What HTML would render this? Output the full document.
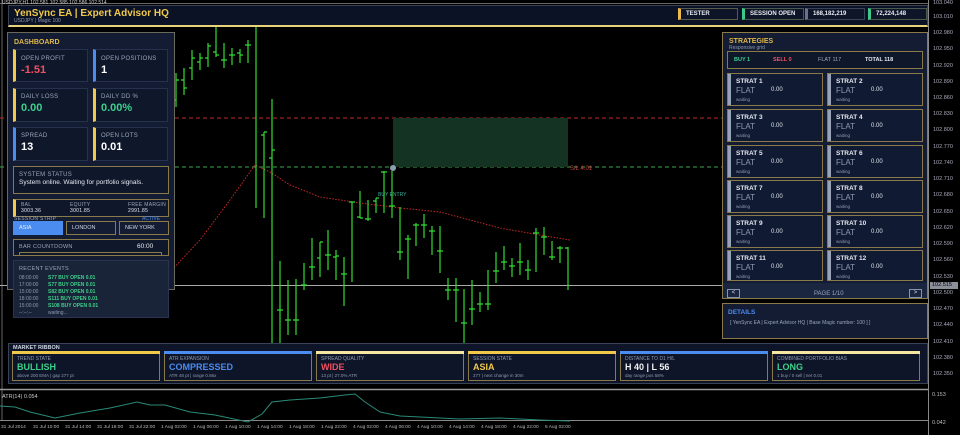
<!DOCTYPE html>
<html><head><meta charset="utf-8"><style>
*{margin:0;padding:0;box-sizing:border-box}
body{width:960px;height:435px;background:#000;font-family:"Liberation Sans",sans-serif;color:#cfd6e2;position:relative;overflow:hidden}
.a{position:absolute}
.p{position:absolute;background:#131c33;border:1px solid #8a7a4a}
.c{position:absolute;background:#0f172b;border:1px solid #26314d}
.lb{font-size:6px;color:#9aa6bc;letter-spacing:.3px;white-space:nowrap}
.ax{position:absolute;left:933px;font-size:5.5px;color:#aab;}
.tk{position:absolute;top:425px;font-size:4.8px;color:#bbb;white-space:nowrap}
.sc{position:absolute;width:96px;height:33px;background:#101a33;border:1px solid #8a7a4a}
.sc i{position:absolute;left:0;top:0;bottom:0;width:3px;background:#98a2b8}
.sc b{position:absolute;left:8px;top:4px;font-size:6.5px;color:#e6e9f0}
.sc s{position:absolute;left:8px;top:12px;font-size:8px;color:#8f9ab0;text-decoration:none}
.sc u{position:absolute;left:43px;top:13px;font-size:6px;color:#dfe3ea;text-decoration:none}
.sc em{position:absolute;left:8px;top:23px;font-size:4.5px;color:#8f9ab0;font-style:normal}
.rc{position:absolute;top:351px;width:148px;height:30px;background:#0e1529;border:1px solid #8a7a4a;border-top-width:0}
.rc i{position:absolute;left:-1px;right:-1px;top:0;height:3px}
.rc .t{position:absolute;left:4px;top:5px;font-size:5px;color:#8f9ab0}
.rc .v{position:absolute;left:4px;top:11px;font-size:9px;font-weight:bold}
.rc .s{position:absolute;left:4px;top:22px;font-size:4.5px;color:#8f9ab0}
</style></head><body>
<svg class="a" style="left:0;top:0" width="960" height="435">
<line x1="2" y1="0" x2="2" y2="420" stroke="#666" stroke-width="1"/>
<line x1="928.5" y1="0" x2="928.5" y2="435" stroke="#888"/>
<line x1="0" y1="3.5" x2="928" y2="3.5" stroke="#666"/>
<line x1="0" y1="118" x2="928" y2="118" stroke="#c62828" stroke-dasharray="4,3"/>
<line x1="0" y1="167" x2="928" y2="167" stroke="#3aa64a" stroke-dasharray="4,3"/>
<rect x="393" y="118" width="175" height="49" fill="#143322"/>
<line x1="0" y1="285.5" x2="928" y2="285.5" stroke="#aaa"/>
<text x="570" y="170" font-size="6" fill="#c04040" font-family="Liberation Sans">S/L 4.01</text>
<text x="378" y="196" font-size="5" fill="#3ab0a0" font-family="Liberation Sans">BUY ENTRY</text>
<circle cx="393" cy="168" r="3" fill="#8aa0b0"/>
<path d="M170 272 L200 240 L230 200 L255 165 L270 172 L290 185 L320 197 L360 203 L400 208 L440 212 L470 220 L500 228 L540 235 L570 240" fill="none" stroke="#c62828" stroke-dasharray="1.5,1.5"/>
<g stroke="#33dd33" stroke-width="1.2" fill="none">
<path d="M176 73V107M173 100h3M176 80h3"/>
<path d="M184 68V95M181 80h3M184 88h3"/>
<path d="M192 50V80M189 68h3M192 58h3"/>
<path d="M200 53V70M197 62h3M200 58h3"/>
<path d="M208 43V67M205 58h3M208 46h3"/>
<path d="M216 27V57M213 52h3M216 55h3"/>
<path d="M224 43V68M221 60h3M224 60h3"/>
<path d="M232 48V65M229 55h3M232 55h3"/>
<path d="M240 49V63M237 53h3M240 55h3"/>
<path d="M248 40V63M245 45h3M248 45h3"/>
<path d="M256 27V208"/>
<path d="M264 132V218M261 135h3M264 132h3"/>
<path d="M272 99V343M269 158h3M272 150h3"/>
<path d="M280 261V343M277 310h3M280 310h3"/>
<path d="M288 280V335M285 320h3M288 320h3"/>
<path d="M296 279V335M293 320h3M296 320h3"/>
<path d="M304 263V290M301 285h3M304 285h3"/>
<path d="M312 238V280M309 267h3M312 267h3"/>
<path d="M320 242V277M317 258h3M320 242h3"/>
<path d="M328 230V270M325 255h3M328 255h3"/>
<path d="M336 250V280M333 257h3M336 256h3"/>
<path d="M344 257V306M341 274h3M344 274h3"/>
<path d="M352 202V282M349 202h3M352 202h3"/>
<path d="M360 191V218M357 217h3M360 218h3"/>
<path d="M368 200V221M365 219h3M368 219h3"/>
<path d="M376 198V213M373 201h3M376 198h3"/>
<path d="M384 171V213M381 172h3M384 172h3"/>
<path d="M392 171V218M389 206h3M392 206h3"/>
<path d="M400 207V260M397 252h3M400 252h3"/>
<path d="M408 235V279M405 239h3M408 239h3"/>
<path d="M416 223V246M413 225h3M416 225h3"/>
<path d="M424 214V238M421 225h3M424 225h3"/>
<path d="M432 226V255M429 231h3M432 231h3"/>
<path d="M440 226V273M437 251h3M440 251h3"/>
<path d="M448 278V300M445 290h3M448 290h3"/>
<path d="M456 278V322M453 290h3M456 290h3"/>
<path d="M464 289V343M461 323h3M464 323h3"/>
<path d="M472 280V325M469 309h3M472 309h3"/>
<path d="M480 292V312M477 304h3M480 304h3"/>
<path d="M488 270V310M485 304h3M488 304h3"/>
<path d="M496 252V283M493 271h3M496 271h3"/>
<path d="M504 246V270M501 262h3M504 262h3"/>
<path d="M512 258V277M509 266h3M512 266h3"/>
<path d="M520 243V275M517 262h3M520 262h3"/>
<path d="M528 260V280M525 270h3M528 270h3"/>
<path d="M536 228V272M533 233h3M536 233h3"/>
<path d="M544 227V255M541 237h3M544 237h3"/>
<path d="M552 241V260M549 257h3M552 257h3"/>
<path d="M560 246V263M557 248h3M560 248h3"/>
<path d="M568 247V290M565 248h3"/>
</g>
<line x1="0" y1="389.5" x2="928" y2="389.5" stroke="#999" stroke-width="1.5"/>
<line x1="0" y1="420.5" x2="928" y2="420.5" stroke="#888"/>
<path d="M0 406L15 407L30 412L55 418L80 413L110 408L137 402L150 405L165 405L190 412L215 415L248 422L262 414L272 402L290 400L320 398L345 395L355 394L365 402L380 412L400 416L420 417L440 418L460 419L500 418L540 420L570 421" fill="none" stroke="#2a8a7a"/>
<text x="2" y="398" font-size="5.5" fill="#ccc" font-family="Liberation Sans">ATR(14) 0.054</text>
<text x="932" y="396" font-size="5.5" fill="#bbb" font-family="Liberation Sans">0.153</text>
<text x="932" y="424" font-size="5.5" fill="#bbb" font-family="Liberation Sans">0.042</text>
</svg>
<div class="a" style="left:2px;top:0;font-size:5px;color:#ccc">USDJPY,H1 102.581 102.585 102.586 102.514</div>
<div class="ax" style="top:0">103.040</div><div class="ax" style="top:14px">103.010</div><div class="ax" style="top:30px">102.980</div><div class="ax" style="top:46px">102.950</div><div class="ax" style="top:63px">102.920</div><div class="ax" style="top:79px">102.890</div><div class="ax" style="top:95px">102.860</div><div class="ax" style="top:111px">102.830</div><div class="ax" style="top:127px">102.800</div><div class="ax" style="top:144px">102.770</div><div class="ax" style="top:160px">102.740</div><div class="ax" style="top:176px">102.710</div><div class="ax" style="top:192px">102.680</div><div class="ax" style="top:209px">102.650</div><div class="ax" style="top:225px">102.620</div><div class="ax" style="top:241px">102.590</div><div class="ax" style="top:257px">102.560</div><div class="ax" style="top:274px">102.530</div><div class="ax" style="top:290px">102.500</div><div class="ax" style="top:306px">102.470</div><div class="ax" style="top:322px">102.440</div><div class="ax" style="top:339px">102.410</div><div class="ax" style="top:355px">102.380</div><div class="ax" style="top:371px">102.350</div>
<div class="a" style="left:930px;top:282px;width:28px;height:7px;background:#8a8f9a;color:#000;font-size:5.5px;padding-left:2px">102.515</div>
<div class="tk" style="left:1px">31 Jul 2014</div><div class="tk" style="left:33px">31 Jul 10:00</div><div class="tk" style="left:65px">31 Jul 14:00</div><div class="tk" style="left:97px">31 Jul 18:00</div><div class="tk" style="left:129px">31 Jul 22:00</div><div class="tk" style="left:161px">1 Aug 02:00</div><div class="tk" style="left:193px">1 Aug 06:00</div><div class="tk" style="left:225px">1 Aug 10:00</div><div class="tk" style="left:257px">1 Aug 14:00</div><div class="tk" style="left:289px">1 Aug 18:00</div><div class="tk" style="left:321px">1 Aug 22:00</div><div class="tk" style="left:353px">4 Aug 02:00</div><div class="tk" style="left:385px">4 Aug 06:00</div><div class="tk" style="left:417px">4 Aug 10:00</div><div class="tk" style="left:449px">4 Aug 14:00</div><div class="tk" style="left:481px">4 Aug 18:00</div><div class="tk" style="left:513px">4 Aug 22:00</div><div class="tk" style="left:545px">5 Aug 02:00</div>
<div class="a" style="left:8px;top:5px;width:920px;height:22px;background:#0b1226;border:1px solid #3a4256;border-bottom:2px solid #e8d27a"></div>
<div class="a" style="left:14px;top:8px;font-size:10px;font-weight:bold;color:#f0c94a">YenSync EA | Expert Advisor HQ</div>
<div class="a" style="left:14px;top:18px;font-size:5px;color:#8f9ab0">USDJPY | Magic 100</div>
<div class="a" style="left:678px;top:8px;width:60px;height:12px;border:1px solid #5a5a48;border-left:3px solid #f0b84a;background:#0e1529;font-size:6px;color:#e6e9f0;padding:2px 0 0 5px;font-weight:bold">TESTER</div>
<div class="a" style="left:742px;top:8px;width:62px;height:12px;border:1px solid #4a5a4a;border-left:3px solid #3cc98a;background:#0e1529;font-size:6px;color:#e6e9f0;padding:2px 0 0 5px;font-weight:bold">SESSION OPEN</div>
<div class="a" style="left:805px;top:8px;width:60px;height:12px;border:1px solid #3a4256;border-left:3px solid #6a7488;background:#0e1529;font-size:6px;color:#e6e9f0;padding:2px 0 0 5px;font-weight:bold">168,182,219</div>
<div class="a" style="left:868px;top:8px;width:59px;height:12px;border:1px solid #4a5a4a;border-left:3px solid #3cc98a;background:#0e1529;font-size:6px;color:#e6e9f0;padding:2px 0 0 5px;font-weight:bold">72,224,148</div>
<div class="p" style="left:7px;top:32px;width:168px;height:258px;border-color:#6a6a5a"></div>
<div class="a" style="left:14px;top:39px;font-size:7px;font-weight:bold;color:#e0b84a">DASHBOARD</div>
<div class="c" style="left:13px;top:49px;width:75px;height:33px;border-left:3px solid #f0c94a"><div class="lb" style="position:absolute;left:5px;top:6px">OPEN PROFIT</div><div style="position:absolute;left:5px;top:14px;font-size:11px;font-weight:bold;color:#f05060">-1.51</div></div>
<div class="c" style="left:93px;top:49px;width:75px;height:33px;border-left:3px solid #4a8cf0"><div class="lb" style="position:absolute;left:5px;top:6px">OPEN POSITIONS</div><div style="position:absolute;left:5px;top:14px;font-size:11px;font-weight:bold;color:#fff">1</div></div>
<div class="c" style="left:13px;top:88px;width:75px;height:34px;border-left:3px solid #f0c94a"><div class="lb" style="position:absolute;left:5px;top:5px">DAILY LOSS</div><div style="position:absolute;left:5px;top:13px;font-size:11px;font-weight:bold;color:#3cd08a">0.00</div></div>
<div class="c" style="left:93px;top:88px;width:75px;height:34px;border-left:3px solid #f0c94a"><div class="lb" style="position:absolute;left:5px;top:5px">DAILY DD %</div><div style="position:absolute;left:5px;top:13px;font-size:11px;font-weight:bold;color:#3cd08a">0.00%</div></div>
<div class="c" style="left:13px;top:127px;width:75px;height:34px;border-left:3px solid #4a8cf0"><div class="lb" style="position:absolute;left:5px;top:5px">SPREAD</div><div style="position:absolute;left:5px;top:13px;font-size:11px;font-weight:bold;color:#fff">13</div></div>
<div class="c" style="left:93px;top:127px;width:75px;height:34px;border-left:3px solid #f0c94a"><div class="lb" style="position:absolute;left:5px;top:5px">OPEN LOTS</div><div style="position:absolute;left:5px;top:13px;font-size:11px;font-weight:bold;color:#fff">0.01</div></div>
<div class="c" style="left:13px;top:166px;width:156px;height:28px;border-color:#8a7a4a"><div class="lb" style="position:absolute;left:5px;top:5px">SYSTEM STATUS</div><div style="position:absolute;left:5px;top:12px;font-size:6.5px;color:#e6e9f0">System online. Waiting for portfolio signals.</div></div>
<div class="c" style="left:13px;top:199px;width:156px;height:18px;border-color:#8a7a4a;border-left:3px solid #f0c94a"><div class="lb" style="position:absolute;left:5px;top:2px;font-size:5px">BAL<br><span style="color:#e6e9f0">3003.36</span></div><div class="lb" style="position:absolute;left:54px;top:2px;font-size:5px">EQUITY<br><span style="color:#e6e9f0">3001.85</span></div><div class="lb" style="position:absolute;left:112px;top:2px;font-size:5px">FREE MARGIN<br><span style="color:#e6e9f0">2991.85</span></div></div>
<div class="a lb" style="left:14px;top:216px;font-size:5px">SESSION STRIP</div><div class="a" style="left:142px;top:216px;font-size:5px;color:#4a8cf0">ACTIVE</div>
<div class="a" style="left:13px;top:221px;width:50px;height:14px;background:#4a8cf0;font-size:5.5px;color:#e6eefc;padding:4px 0 0 6px">ASIA</div>
<div class="a" style="left:66px;top:221px;width:50px;height:14px;background:#131c33;border:1px solid #8a7a4a;font-size:5.5px;color:#cfd6e2;padding:3px 0 0 5px">LONDON</div>
<div class="a" style="left:119px;top:221px;width:50px;height:14px;background:#131c33;border:1px solid #8a7a4a;font-size:5.5px;color:#cfd6e2;padding:3px 0 0 5px">NEW YORK</div>
<div class="c" style="left:13px;top:239px;width:156px;height:17px;border-color:#8a7a4a"><div class="lb" style="position:absolute;left:5px;top:4px;font-size:5.5px">BAR COUNTDOWN</div><div style="position:absolute;left:123px;top:3px;font-size:6.5px;color:#e6e9f0">60:00</div><div style="position:absolute;left:5px;top:12px;width:143px;height:3px;border:1px solid #8a7a4a;border-bottom:0"></div></div>
<div class="c" style="left:13px;top:260px;width:156px;height:58px;background:#1a2438;border-color:#2a3450"><div class="lb" style="position:absolute;left:5px;top:5px;font-size:5.5px">RECENT EVENTS</div>
<div style="position:absolute;left:5px;top:14px;font-size:5px;line-height:7px;color:#8f9ab0">08:00:00<br>17:00:00<br>15:00:00<br>18:00:00<br>15:00:00<br>--:--:--</div>
<div style="position:absolute;left:34px;top:14px;font-size:5px;line-height:7px;color:#3cd08a;font-weight:bold">S77 BUY OPEN 0.01<br>S77 BUY OPEN 0.01<br>S82 BUY OPEN 0.01<br>S111 BUY OPEN 0.01<br>S108 BUY OPEN 0.01<br><span style="color:#8f9ab0;font-weight:normal">waiting...</span></div></div>
<div class="p" style="left:722px;top:32px;width:206px;height:267px"></div>
<div class="a" style="left:729px;top:38px;font-size:7px;font-weight:bold;color:#e0b84a">STRATEGIES</div>
<div class="a" style="left:729px;top:45px;font-size:5px;color:#8f9ab0">Responsive grid</div>
<div class="a" style="left:727px;top:51px;width:196px;height:18px;border:1px solid #8a7a4a;background:#0f172b;font-size:5.5px;font-weight:bold"><span class="a" style="left:6px;top:5px;color:#3cd08a">BUY 1</span><span class="a" style="left:45px;top:5px;color:#f05060">SELL 0</span><span class="a" style="left:90px;top:5px;color:#9aa6bc;font-weight:normal">FLAT 117</span><span class="a" style="left:137px;top:5px;color:#e6e9f0">TOTAL 118</span></div>
<div class="sc" style="left:727px;top:73px"><i></i><b>STRAT 1</b><s>FLAT</s><u>0.00</u><em>waiting</em></div>
<div class="sc" style="left:827px;top:73px"><i></i><b>STRAT 2</b><s>FLAT</s><u>0.00</u><em>waiting</em></div>
<div class="sc" style="left:727px;top:109px"><i></i><b>STRAT 3</b><s>FLAT</s><u>0.00</u><em>waiting</em></div>
<div class="sc" style="left:827px;top:109px"><i></i><b>STRAT 4</b><s>FLAT</s><u>0.00</u><em>waiting</em></div>
<div class="sc" style="left:727px;top:145px"><i></i><b>STRAT 5</b><s>FLAT</s><u>0.00</u><em>waiting</em></div>
<div class="sc" style="left:827px;top:145px"><i></i><b>STRAT 6</b><s>FLAT</s><u>0.00</u><em>waiting</em></div>
<div class="sc" style="left:727px;top:180px"><i></i><b>STRAT 7</b><s>FLAT</s><u>0.00</u><em>waiting</em></div>
<div class="sc" style="left:827px;top:180px"><i></i><b>STRAT 8</b><s>FLAT</s><u>0.00</u><em>waiting</em></div>
<div class="sc" style="left:727px;top:215px"><i></i><b>STRAT 9</b><s>FLAT</s><u>0.00</u><em>waiting</em></div>
<div class="sc" style="left:827px;top:215px"><i></i><b>STRAT 10</b><s>FLAT</s><u>0.00</u><em>waiting</em></div>
<div class="sc" style="left:727px;top:250px;height:31px"><i></i><b>STRAT 11</b><s>FLAT</s><u>0.00</u><em>waiting</em></div>
<div class="sc" style="left:827px;top:250px;height:31px"><i></i><b>STRAT 12</b><s>FLAT</s><u>0.00</u><em>waiting</em></div>
<div class="a" style="left:723px;top:283px;width:204px;height:15px;background:#1a2540"></div>
<div class="a" style="left:727px;top:289px;width:13px;height:9px;border:1px solid #8a94a8;background:#1a2540;font-size:6px;color:#dde;text-align:center">&lt;</div>
<div class="a" style="left:909px;top:289px;width:13px;height:9px;border:1px solid #8a94a8;background:#1a2540;font-size:6px;color:#dde;text-align:center">&gt;</div>
<div class="a" style="left:814px;top:291px;font-size:6px;color:#9aa6bc">PAGE 1/10</div>
<div class="p" style="left:722px;top:303px;width:206px;height:36px"></div>
<div class="a" style="left:728px;top:309px;font-size:6.5px;font-weight:bold;color:#4a8cf0">DETAILS</div>
<div class="a" style="left:730px;top:320px;font-size:5px;color:#9aa6bc">[ YenSync EA | Expert Advisor HQ | Base Magic number: 100 ] ]</div>
<div class="a" style="left:8px;top:343px;width:920px;height:41px;background:#0e1529;border:1px solid #3a4256"></div>
<div class="a" style="left:13px;top:345px;font-size:5.5px;font-weight:bold;color:#cfd6e2">MARKET RIBBON</div>
<div class="rc" style="left:12px"><i style="background:#f0c94a"></i><div class="t">TREND STATE</div><div class="v" style="color:#3cd08a">BULLISH</div><div class="s">above 200 EMA | gap 277 pt</div></div>
<div class="rc" style="left:164px"><i style="background:#4a8cf0"></i><div class="t">ATR EXPANSION</div><div class="v" style="color:#4a8cf0">COMPRESSED</div><div class="s">ATR 48 pt | range 0.86x</div></div>
<div class="rc" style="left:316px"><i style="background:#f5e6a0"></i><div class="t">SPREAD QUALITY</div><div class="v" style="color:#f05060">WIDE</div><div class="s">13 pt | 27.0% ATR</div></div>
<div class="rc" style="left:468px"><i style="background:#f0c94a"></i><div class="t">SESSION STATE</div><div class="v" style="color:#f0c94a">ASIA</div><div class="s">277 | next change in 30m</div></div>
<div class="rc" style="left:620px"><i style="background:#4a8cf0"></i><div class="t">DISTANCE TO D1 H/L</div><div class="v" style="color:#f0f0f0">H 40 | L 56</div><div class="s">day range pos 58%</div></div>
<div class="rc" style="left:772px"><i style="background:#f5e6a0"></i><div class="t">COMBINED PORTFOLIO BIAS</div><div class="v" style="color:#3cd08a">LONG</div><div class="s">1 buy / 0 sell | net 0.01</div></div>
</body></html>
